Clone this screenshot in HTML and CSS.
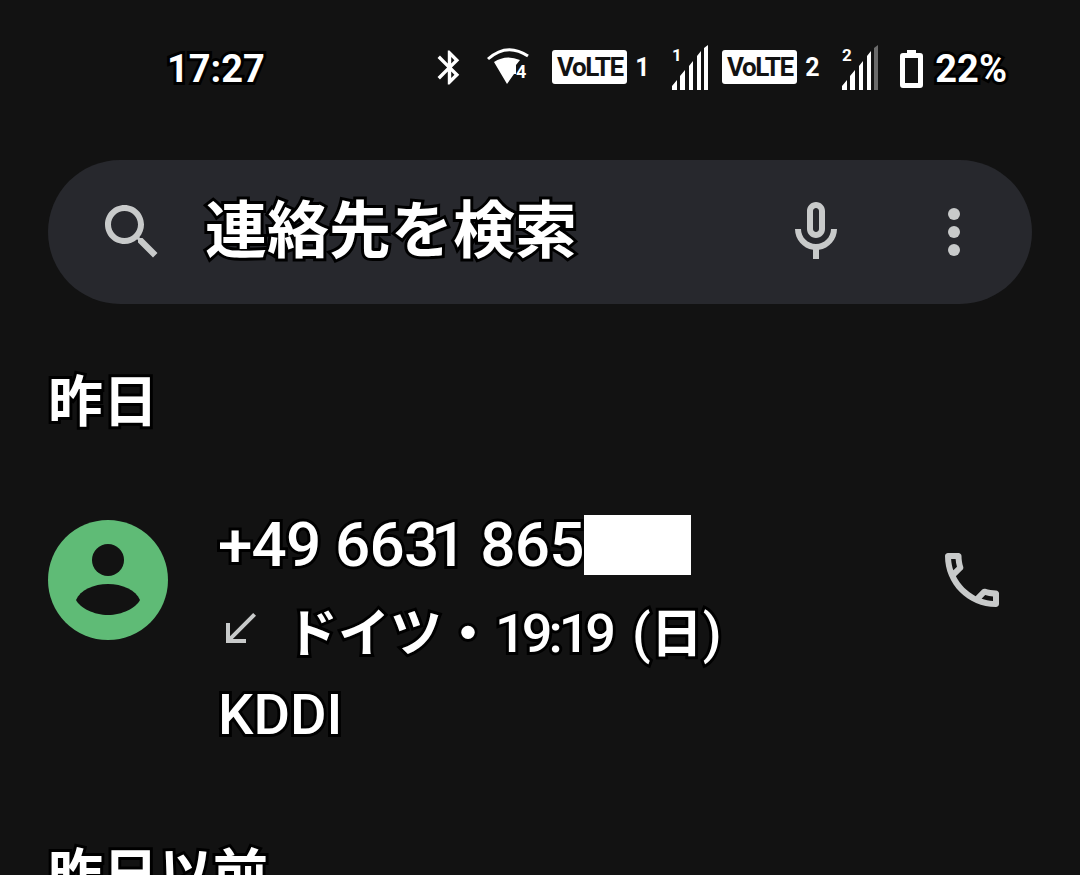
FILE: index.html
```html
<!DOCTYPE html>
<html lang="ja">
<head>
    <meta charset="UTF-8">
    <title>通話履歴</title>
    <link rel="stylesheet" href="styles.css">
</head>
<body>

<div class="status-bar">
    <span class="clock outlined">17:27</span>
    <div class="status-icons">
        <svg class="ic-bt" width="41" height="41" viewBox="0 0 24 24"><path fill="#fff" d="M17.71 7.71L12 2h-1v7.59L6.41 5 5 6.41 10.59 12 5 17.59 6.41 19 11 14.41V22h1l5.71-5.71-4.3-4.29 4.3-4.29zM13 5.83l1.88 1.88L13 9.59V5.83zm1.88 10.46L13 18.17v-3.76l1.88 1.88z"/></svg>
        <svg class="ic-wifi" width="44" height="40" viewBox="0 0 44 40">
            <path fill="none" stroke="#fff" stroke-width="3" d="M1 12Q20 -5 41 9"/>
            <path fill="#fff" d="M7 15Q19 7 33 13L29 18V27H27L20 37z"/>
            <text class="wifi-digit" x="29" y="31">4</text>
        </svg>
        <span class="volte">VoLTE</span>
        <span class="sim-no sim-one">1</span>
        <svg class="ic-signal" width="36" height="46" viewBox="0 0 36 46">
            <text class="signal-digit" x="0" y="16">1</text>
            <path fill="#fff" d="M0 45V41L5 35V45zM8 45V31L13 25V45zM17 45V21L21 16V45zM25 45V11L29 6V45zM32 45V3L36 0V45z"/>
        </svg>
        <span class="volte volte-two">VoLTE</span>
        <span class="sim-no sim-two">2</span>
        <svg class="ic-signal ic-signal-two" width="36" height="46" viewBox="0 0 36 46">
            <text class="signal-digit" x="0" y="16">2</text>
            <path fill="#fff" d="M0 45V41L5 35V45zM8 45V31L13 25V45zM17 45V21L21 16V45zM25 45V11L29 6V45z"/>
            <path fill="#6b6b6b" d="M32 45V3L36 0V45z"/>
        </svg>
        <svg class="ic-battery" width="23" height="38" viewBox="0 0 23 38">
            <path fill="#fff" fill-rule="evenodd" d="M7 0H16V3H20Q23 3 23 6V35Q23 38 20 38H3Q0 38 0 35V6Q0 3 3 3H7zM5 8V33H18V8z"/>
        </svg>
        <span class="battery-pct outlined">22%</span>
    </div>
</div>

<div class="search-bar">
    <svg class="search-icon" width="72" height="72" viewBox="0 0 24 24"><path d="M15.5 14h-.79l-.28-.27C15.41 12.59 16 11.11 16 9.5 16 5.91 13.09 3 9.5 3S3 5.91 3 9.5 5.91 16 9.5 16c1.61 0 3.09-.59 4.23-1.57l.27.28v.79l5 4.99L20.49 19l-4.99-5zm-6 0C7.01 14 5 11.99 5 9.5S7.01 5 9.5 5 14 7.01 14 9.5 11.99 14 9.5 14z"/></svg>
    <span class="search-text outlined">連絡先を検索</span>
    <svg class="mic-icon" width="72" height="72" viewBox="0 0 24 24"><path d="M12 14c1.66 0 3-1.34 3-3V5c0-1.66-1.34-3-3-3S9 3.34 9 5v6c0 1.66 1.34 3 3 3zm-1-9c0-.55.45-1 1-1s1 .45 1 1v6c0 .55-.45 1-1 1s-1-.45-1-1V5zm6 6c0 2.76-2.24 5-5 5s-5-2.24-5-5H5c0 3.53 2.61 6.43 6 6.92V21h2v-3.08c3.39-.49 6-3.39 6-6.92h-2z"/></svg>
    <svg class="more-icon" width="72" height="72" viewBox="0 0 72 72"><circle cx="36" cy="18" r="6"/><circle cx="36" cy="36" r="6"/><circle cx="36" cy="54" r="6"/></svg>
</div>

<h2 class="section-title outlined">昨日</h2>

<div class="call-row">
    <svg class="avatar" width="120" height="120" viewBox="0 0 120 120">
        <circle cx="60" cy="60" r="60" fill="#5fbb76"/>
        <circle cx="60" cy="40" r="16" fill="#121212"/>
        <path fill="#121212" d="M28 80C32 70 46 64 60 64S88 70 92 80C88 88 74 95 60 95S32 88 28 80z"/>
    </svg>
    <div class="call-info">
        <div class="call-number outlined">+49 66<span class="tight">3</span>1 865<span class="redacted"></span></div>
        <div class="call-meta">
            <svg class="received-icon" width="48" height="48" viewBox="0 0 24 24"><path d="M20 5.41L18.59 4 7 15.59V9H5v10h10v-2H8.41z"/></svg>
            <span class="outlined">ドイツ<span class="meta-dot">・</span><span class="meta-time">19:19</span><span class="meta-day">(<b>日</b>)</span></span>
        </div>
        <div class="call-carrier outlined">KDDI</div>
    </div>
    <svg class="call-icon" width="72" height="72" viewBox="0 0 24 24"><path d="M6.54 5c.06.89.21 1.76.45 2.59l-1.2 1.2c-.41-1.2-.67-2.47-.76-3.79h1.51m9.86 12.02c.85.24 1.72.39 2.6.45v1.49c-1.32-.09-2.59-.35-3.8-.75l1.2-1.19M7.5 3H4c-.55 0-1 .45-1 1 0 9.39 7.61 17 17 17 .55 0 1-.45 1-1v-3.49c0-.55-.45-1-1-1-1.24 0-2.45-.2-3.57-.57-.1-.04-.21-.05-.31-.05-.26 0-.51.1-.71.29l-2.2 2.2c-2.83-1.45-5.15-3.76-6.59-6.59l2.2-2.2c.28-.28.36-.67.25-1.02C8.7 6.45 8.5 5.25 8.5 4c0-.55-.45-1-1-1z"/></svg>
</div>

<h2 class="section-title section-older outlined">昨日以前</h2>

</body>
</html>
```

FILE: styles.css
```css
html, body {
    height: 100%;
    overflow: hidden;
}

body {
    margin: 0;
    background-color: #121212;
    color: #fff;
    font-family: Roboto, "Noto Sans CJK JP", sans-serif;
}

/* high contrast text: black edge round the letters */
.outlined {
    -webkit-text-stroke: 6px #000;
    paint-order: stroke fill;
}

.status-bar {
    display: flex;
    align-items: center;
    justify-content: space-between;
    height: 140px;
    padding: 0 73px 2px 167px;
    box-sizing: border-box;
}

.clock {
    font-size: 38px;
    font-weight: 700;
}

.status-icons {
    display: flex;
    align-items: center;
}

.ic-bt {
    margin-top: -4px;
}

.ic-wifi {
    margin-left: 17px;
    margin-top: -4px;
}

.wifi-digit {
    font-size: 18px;
    font-weight: 700;
    fill: #fff;
}

.volte {
    margin-left: 21px;
    margin-top: -4px;
    width: 75px;
    height: 34px;
    background-color: #fff;
    border-radius: 3px;
    color: #121212;
    font-size: 26px;
    font-weight: 700;
    line-height: 34px;
    text-align: center;
    letter-spacing: -1.5px;
}

.volte-two {
    margin-left: 14px;
}

.sim-no {
    width: 13px;
    font-size: 25px;
    font-weight: 700;
    text-align: center;
}

.sim-one {
    margin-left: 8px;
    margin-top: -4px;
}

.sim-two {
    margin-left: 8px;
    margin-top: -4px;
}

.ic-signal {
    margin-left: 24px;
    margin-top: -2px;
}

.signal-digit {
    font-size: 17px;
    font-weight: 700;
    fill: #fff;
}

.ic-battery {
    margin-left: 22px;
}

.battery-pct {
    margin-left: 12px;
    font-size: 38px;
    font-weight: 700;
}

.search-bar {
    display: flex;
    align-items: center;
    height: 144px;
    margin: 20px 48px 0;
    padding: 0 42px 0 48px;
    box-sizing: border-box;
    background-color: #27282d;
    border-radius: 72px;
}

.search-bar svg,
.call-row > svg:last-child,
.received-icon {
    fill: #c8caca;
}

.search-text {
    margin-left: 37px;
    padding-bottom: 12px;
    font-size: 62px;
    font-weight: 700;
    flex: 1;
}

.more-icon {
    margin-left: 66px;
}

.section-title {
    margin: 0;
    padding: 60px 48px 0;
    font-size: 55px;
    font-weight: 700;
    line-height: 76px;
}

.call-row {
    display: flex;
    align-items: flex-start;
    margin: 0 48px;
    padding-top: 75px;
}

.avatar {
    flex: none;
    margin-top: 5px;
}

.call-info {
    flex: 1;
    margin-left: 50px;
    font-size: 60px;
    font-weight: 500;
}

.call-number {
    height: 60px;
    font-size: 62px;
    line-height: 60px;
    white-space: pre;
    letter-spacing: -0.8px;
}

.tight {
    letter-spacing: -8px;
}

.redacted {
    display: inline-block;
    vertical-align: top;
    width: 107px;
    height: 60px;
    background-color: #fff;
}

.call-meta {
    display: flex;
    align-items: center;
    height: 60px;
    margin-top: 24px;
    margin-left: -2px;
    font-size: 52px;
    font-weight: 700;
}

.meta-dot {
    letter-spacing: 1px;
}

.meta-time {
    font-size: 54px;
    font-weight: 500;
    letter-spacing: -4px;
}

.meta-day {
    margin-left: 20px;
    font-size: 54px;
    font-weight: 500;
}

.meta-day b {
    font-size: 52px;
    font-weight: 700;
}

.received-icon {
    margin-right: 22px;
}

.call-carrier {
    margin-top: 26px;
    font-size: 56px;
    line-height: 60px;
}

.call-icon {
    flex: none;
    margin-top: 29px;
    margin-right: 24px;
}

.section-older {
    padding-top: 92px;
}
```
